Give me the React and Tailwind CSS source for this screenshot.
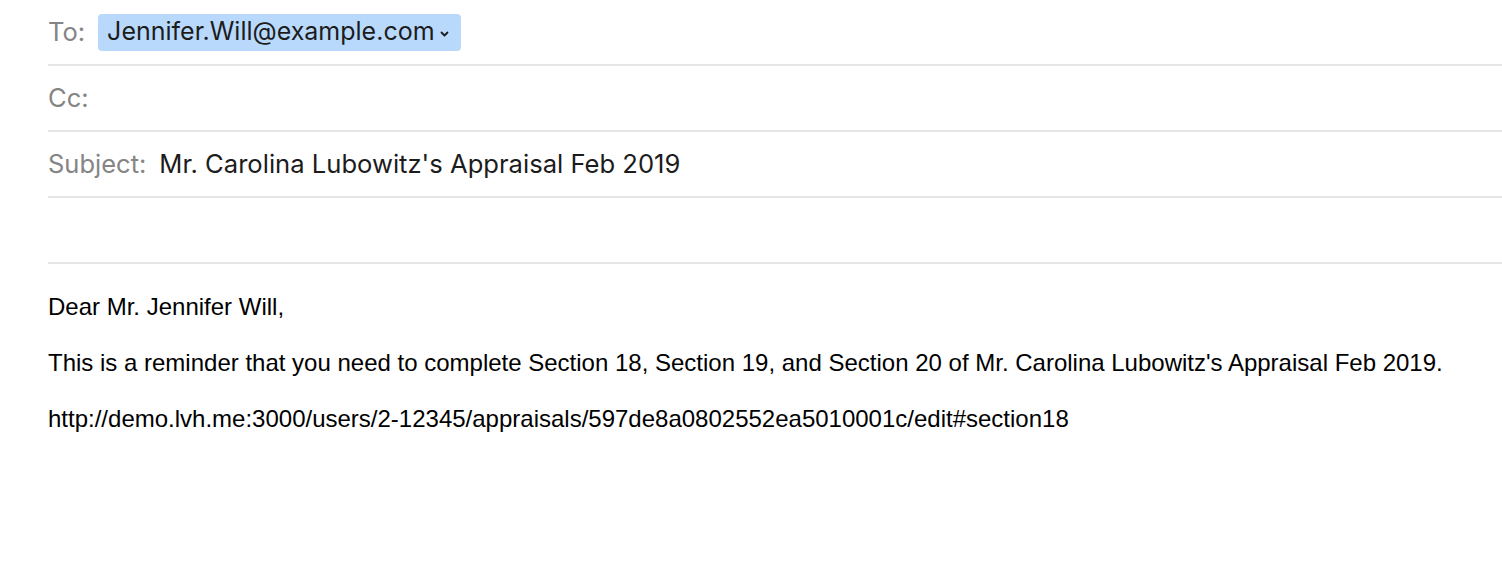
import React from 'react';

function HeaderRow({ label, children }) {
  return (
    <div className="flex h-[66px] items-center border-b-2 border-[#e5e5e5]">
      <span className="text-[25.5px] text-[#858585]">{label}</span>
      {children}
    </div>
  );
}

export default function App() {
  return (
    <div className="min-h-[562px] bg-white pl-12">
      {/* Compose header fields */}
      <div className="font-['Inter','Liberation_Sans',sans-serif]">
        <HeaderRow label="To:">
          <div className="ml-[13px] flex h-[37px] items-center rounded-[4px] bg-[#b9d9fc] pl-[9px] pr-[11px] text-[25px] text-[#1c1c1c]">
            <span>Jennifer.Will@example.com</span>
            <svg className="ml-[4px] mt-[3px] h-[8px] w-[11px]" viewBox="0 0 11 8" fill="none">
              <path d="M2.5 2.5 L5.5 5.5 L8.5 2.5" stroke="#1c1c1c" strokeWidth="1.8" strokeLinecap="round" strokeLinejoin="round" />
            </svg>
          </div>
        </HeaderRow>
        <HeaderRow label="Cc:" />
        <HeaderRow label="Subject:">
          <span className="ml-[13px] text-[25.6px] text-[#1c1c1c]">Mr. Carolina Lubowitz's Appraisal Feb 2019</span>
        </HeaderRow>
        <HeaderRow label="" />
      </div>

      {/* Message body */}
      <div className="pt-[31px] font-['Liberation_Sans',Arial,sans-serif] text-[24px] leading-[24px] text-black">
        <p>Dear Mr. Jennifer Will,</p>
        <p className="mt-[32px]">
          This is a reminder that you need to complete Section 18, Section 19, and Section 20 of Mr. Carolina Lubowitz's Appraisal Feb 2019.
        </p>
        <p className="mt-[32px]">http://demo.lvh.me:3000/users/2-12345/appraisals/597de8a0802552ea5010001c/edit#section18</p>
      </div>
    </div>
  );
}
